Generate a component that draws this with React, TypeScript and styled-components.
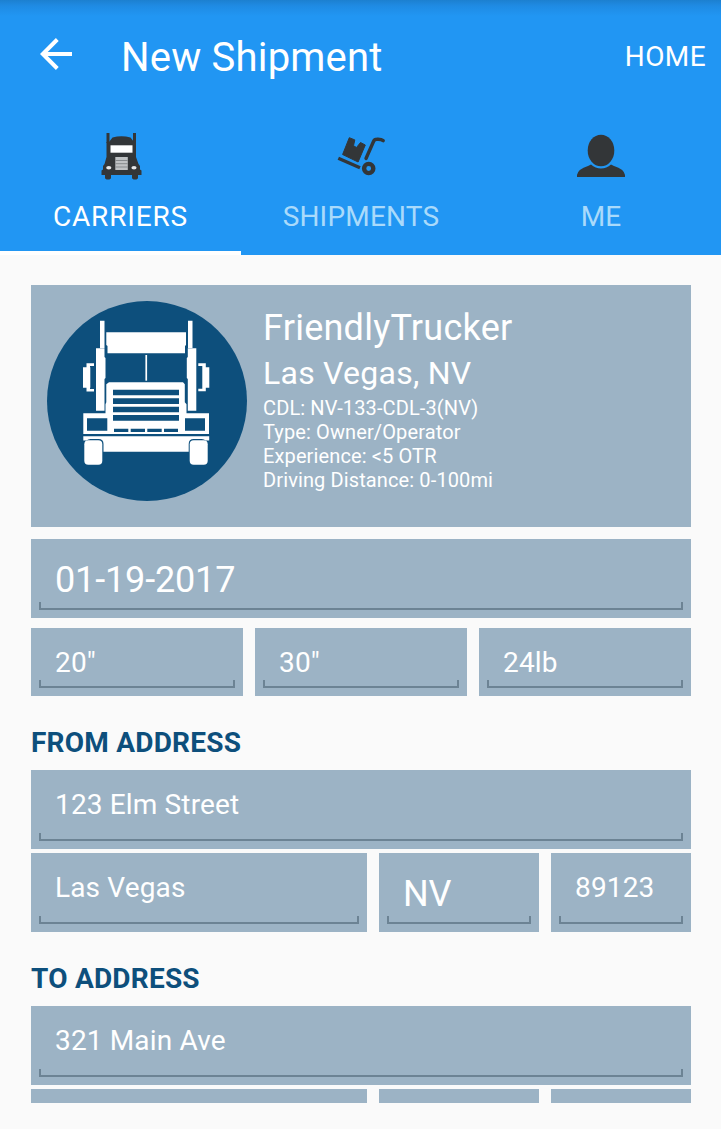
import React from "react";
import styled, { createGlobalStyle } from "styled-components";

const GlobalStyle = createGlobalStyle`
  * { box-sizing: border-box; }
  body { margin: 0; background: #fafafa; font-family: Roboto, "Liberation Sans", sans-serif; }
`;

const Screen = styled.div`
  width: 721px;
  height: 1129px;
  overflow: hidden;
  background: #fafafa;
`;

const Header = styled.header`
  height: 255px;
  background: linear-gradient(#1c80d0 0, #1f8be4 6px, #2196f3 16px, #2196f3 100%);
`;

const Toolbar = styled.div`
  display: flex;
  align-items: center;
  height: 112px;
  padding: 0 15px 0 40px;
  color: #fff;
`;

const BackIcon = styled.svg`
  flex: none;
  width: 32px;
  height: 32px;
  margin-bottom: 4px;
`;

const Title = styled.h1`
  flex: 1;
  margin: 4px 0 0 49px;
  font-size: 40px;
  line-height: 48px;
  font-weight: 400;
  letter-spacing: 0.2px;
`;

const HomeButton = styled.span`
  margin-top: 2px;
  font-size: 28px;
  line-height: 32px;
  letter-spacing: 0.4px;
`;

const Tabs = styled.nav`
  display: grid;
  grid-template-columns: 241px 240px 240px;
  height: 143px;
`;

const Tab = styled.div<{ $active?: boolean; $tracking?: number }>`
  display: flex;
  flex-direction: column;
  align-items: center;
  padding-top: 8px;
  font-size: 28px;
  line-height: 34px;
  letter-spacing: ${(p) => p.$tracking ?? 0}px;
  color: ${(p) => (p.$active ? "#fff" : "#a9dafb")};
  border-bottom: 4px solid ${(p) => (p.$active ? "#fff" : "transparent")};
`;

const TabIcon = styled.svg`
  width: 80px;
  height: 70px;
  margin-bottom: 10px;
`;

const Content = styled.main`
  display: flex;
  flex-direction: column;
  height: 848px;
  padding: 30px 30px 0 31px;
  overflow: hidden;
`;

const ProfileCard = styled.section`
  display: flex;
  flex: none;
  height: 242px;
  padding: 16px;
  gap: 16px;
  background: #9cb3c5;
  color: #fff;
`;

const Avatar = styled.svg`
  flex: none;
  width: 200px;
  height: 200px;
`;

const Name = styled.h2`
  margin: 6px 0 0;
  font-size: 36px;
  line-height: 42px;
  font-weight: 400;
  letter-spacing: 0.25px;
`;

const City = styled.div`
  margin: 4px 0 3px;
  font-size: 32px;
  line-height: 40px;
  letter-spacing: 0.25px;
`;

const Detail = styled.div`
  font-size: 20px;
  line-height: 24px;
  letter-spacing: 0.12px;
`;

const Row = styled.div<{ $columns?: string; $top?: number }>`
  display: grid;
  flex: none;
  grid-template-columns: ${(p) => p.$columns ?? "1fr"};
  column-gap: 12px;
  margin-top: ${(p) => p.$top ?? 0}px;
`;

const Field = styled.div<{ $large?: boolean; $compact?: boolean }>`
  display: flex;
  flex-direction: column;
  justify-content: space-between;
  height: ${(p) => (p.$compact ? 68 : 79)}px;
  padding: ${(p) => (p.$large ? 20 : 19)}px 8px 8px;
  background: #9cb3c5;
  color: #fff;
  font-size: ${(p) => (p.$large ? 36 : 28)}px;
  line-height: ${(p) => (p.$large ? 42 : 32)}px;
  letter-spacing: ${(p) => (p.$large ? -0.15 : 0.15)}px;
`;

const Value = styled.span`
  height: 30px;
  padding-left: 16px;
  white-space: nowrap;
`;

const Underline = styled.span`
  flex: none;
  height: 8px;
  border: 2px solid #6c8394;
  border-top: 0;
`;

const SectionTitle = styled.h3`
  flex: none;
  margin: 30px 0 11px;
  color: #0d4f7c;
  font-size: 28px;
  line-height: 33px;
  font-weight: 700;
  letter-spacing: 0.22px;
`;

type InputProps = { value: string; large?: boolean; compact?: boolean };

const Input = ({ value, large, compact }: InputProps) => (
  <Field $large={large} $compact={compact}>
    <Value>{value}</Value>
    <Underline />
  </Field>
);

const TruckTab = () => (
  <TabIcon viewBox="0 0 80 70">
    <g fill="#333638">
      <path d="M25.500 13h3v10h-3zM52 13h3v10h-3z" />
      <path d="M25.500 22H28l3.500-4.500q9-2.500 18 0L53 22h2v15l2.500 7 1.500 2v3.500l1.500 1V55H57v2.500q0 2-3 2t-3-2V55H30v2.500q0 2-3 2t-3-2V55h-3.500v-4.500l1.500-1V46l1.500-2 2-7z" />
    </g>
    <path d="M29.500 25.300h22v7.400h-22z" fill="#fff" />
    <path d="M34.300 37h12.500v13H34.300z" fill="#bfc2c4" />
    <path d="M34.300 40.500h12.500M34.300 43.700h12.500M34.300 47h12.500" stroke="#85898c" strokeWidth="1" />
    <ellipse cx="27.800" cy="47.700" rx="2.600" ry="1.800" fill="#e8e8e8" />
    <ellipse cx="53" cy="47.700" rx="2.600" ry="1.800" fill="#e8e8e8" />
  </TabIcon>
);

const CartTab = () => (
  <TabIcon viewBox="0 0 80 70">
    <path
      d="M28.300 17.700l5.500 2.200-1.300 5.800 3 1.800 4-5 4.800 2.500-7.200 17-15.500-7.500z"
      fill="#333638"
      stroke="#333638"
      strokeWidth="1"
    />
    <g fill="none" stroke="#333638">
      <path d="M17.300 38.300L39 47.700" strokeWidth="3.400" />
      <path d="M45 38.500L52.500 21.500q1-2.200 3.200-2.200 4.500-.3 6.500 1.300" strokeWidth="3.400" strokeLinecap="round" />
      <circle cx="47.700" cy="48.500" r="4.600" strokeWidth="4.400" />
    </g>
  </TabIcon>
);

const PersonTab = () => (
  <TabIcon viewBox="0 0 80 70">
    <g fill="#333638">
      <ellipse cx="40" cy="30.500" rx="13.300" ry="15.800" />
      <path d="M16 57v-2q1-6 11-9l3-1.500q4.500 4 10 4t10-4l3 1.500q10 3 11 9v2z" />
    </g>
  </TabIcon>
);

const TruckAvatar = () => (
  <Avatar viewBox="0 0 200 200">
    <circle cx="100" cy="100" r="100" fill="#0d4f7c" />
    <g fill="#fff">
      <path d="M53 19.700h4.500V47H53zM141 19.700h4.500V47H141z" />
      <path d="M49 47.300h8.500V56l1 1v20l-1 1v31.700H49zM149.300 47.300h-8.500V56l-1 1v20l1 1v31.700h8.500z" />
      <path d="M59.300 31.300H139V44l-1 1v7.300H60.500V45l-1.200-1z" />
      <path d="M98.400 54h1.700v25.700h-1.700z" />
      <path d="M62 81.300h74l1.800 2v18l1.700 2v9H162V133H36.300v-20.700H58.500v-9l.8-2v-18z" />
      <path d="M36.300 135.300h125.900v4.200h-3.500q-1.500-1.500-4-1.500h-8q-5 0-5 5v7.700H56.500V143q0-5-5-5h-8q-2.500 0-4 1.500h-3.200z" />
      <rect x="37.300" y="139.300" width="18" height="24.400" rx="4" />
      <rect x="142.700" y="139.300" width="18" height="24.400" rx="4" />
      <path d="M36 66.300h3.500v-4H47V65h-4v1.300h.3v20.400h-.3V88h4v2.600h-7.500v-3.900H36zM162.300 66.300h-3.500v-4h-7.500V65h4v22.700h-4v2.600h7.500v-3.600h3.500z" />
    </g>
    <g fill="#0d4f7c">
      <path d="M40 117.300h20.300v12.400H40zM138 117.300h20v12.400h-20z" />
      <path d="M66 88.700h66v5.600H66zM66 97.300h66v5.700H66zM66 105.700h66v5.600H66zM66 114h66v5.700H66z" />
      <path d="M67 127.700h14.300v3.300H67zM83.700 127.700H98v3.300H83.700zM100.300 127.700h14.400v3.300h-14.400zM117 127.700h14v3.300h-14z" />
    </g>
  </Avatar>
);

export default function App() {
  return (
    <Screen>
      <GlobalStyle />
      <Header>
        <Toolbar>
          <BackIcon viewBox="0 0 32 32" fill="none" stroke="#fff" strokeWidth="4">
            <path d="M32 16H3M17.300 1.500L2.800 16l14.500 14.500" />
          </BackIcon>
          <Title>New Shipment</Title>
          <HomeButton>HOME</HomeButton>
        </Toolbar>
        <Tabs>
          <Tab $active $tracking={0.85}><TruckTab />CARRIERS</Tab>
          <Tab $tracking={0.2}><CartTab />SHIPMENTS</Tab>
          <Tab><PersonTab />ME</Tab>
        </Tabs>
      </Header>
      <Content>
        <ProfileCard>
          <TruckAvatar />
          <div>
            <Name>FriendlyTrucker</Name>
            <City>Las Vegas, NV</City>
            <Detail>CDL: NV-133-CDL-3(NV)</Detail>
            <Detail>Type: Owner/Operator</Detail>
            <Detail>Experience: &lt;5 OTR</Detail>
            <Detail>Driving Distance: 0-100mi</Detail>
          </div>
        </ProfileCard>
        <Row $top={12}><Input large value="01-19-2017" /></Row>
        <Row $top={10} $columns="repeat(3, 1fr)">
          <Input compact value={'20"'} />
          <Input compact value={'30"'} />
          <Input compact value="24lb" />
        </Row>
        <SectionTitle>FROM ADDRESS</SectionTitle>
        <Row><Input value="123 Elm Street" /></Row>
        <Row $top={4} $columns="336px 160px 140px">
          <Input value="Las Vegas" />
          <Input large value="NV" />
          <Input value="89123" />
        </Row>
        <SectionTitle>TO ADDRESS</SectionTitle>
        <Row><Input value="321 Main Ave" /></Row>
        <Row $top={4} $columns="336px 160px 140px">
          <Input value="" />
          <Input large value="" />
          <Input value="" />
        </Row>
      </Content>
    </Screen>
  );
}
